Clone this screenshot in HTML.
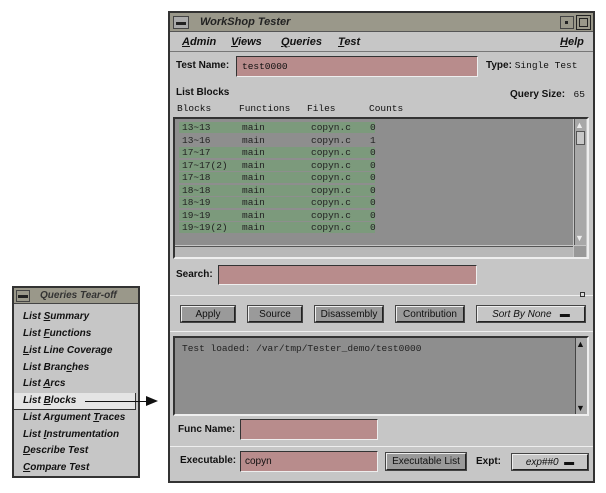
<!DOCTYPE html>
<html><head><style>
*{margin:0;padding:0;box-sizing:border-box}
body{width:606px;height:493px;background:#fff;position:relative;overflow:hidden;font-family:"Liberation Sans",sans-serif;font-size:10px;color:#111}
.a{position:absolute}
.win{left:168px;top:11px;width:427px;height:472px;background:#c6c6c6;border:2px solid #333}
.fld{background:#b88c8c;border:1px solid #333;border-right-color:#eee;border-bottom-color:#eee}
.btn{background:#9a9a9a;border:1px solid #222;border-top-color:#eee;border-left-color:#eee;box-shadow:0 0 0 1px #444;text-align:center;line-height:15px;font-size:10px}
.mono{font-family:"Liberation Mono",monospace;font-size:9.5px}
.row{position:absolute;left:4px;height:11px;width:196px;background:#7c9a7c;font-family:"Liberation Mono",monospace;font-size:9.5px;line-height:11px;color:#222}
.row span{position:absolute}
.sep{height:1px;background:#888;border-bottom:1px solid #eee}
b{font-weight:bold}
.it{font-style:italic;font-weight:bold}
.mi{position:absolute;left:10px;font-style:italic;font-weight:bold;font-size:10px;color:#111}
</style></head><body>
<div class="a win">
 <div class="a" style="left:0;top:0;width:423px;height:19px;background:#9a988a;border-bottom:1px solid #555"></div>
 <div class="a" style="left:3px;top:3px;width:16px;height:13px;border:1px solid #444;background:#aaa"><div class="a" style="left:2px;top:5px;width:10px;height:3px;background:#222"></div></div>
 <div class="a it" style="left:30px;top:3px;font-size:11px;color:#222">WorkShop Tester</div>
 <div class="a" style="left:390px;top:3px;width:14px;height:13px;border:1px solid #444"><div class="a" style="left:4px;top:4px;width:3px;height:3px;background:#222"></div></div>
 <div class="a" style="left:406px;top:2px;width:15px;height:15px;border:1px solid #222"><div class="a" style="left:2px;top:2px;width:9px;height:9px;border:1px solid #222"></div></div>
 <div class="a" style="left:0;top:19px;width:423px;height:20px;border-bottom:1px solid #777"></div>
 <div class="a it" style="left:12px;top:23px;font-size:11px"><u>A</u>dmin</div>
 <div class="a it" style="left:61px;top:23px;font-size:11px"><u>V</u>iews</div>
 <div class="a it" style="left:111px;top:23px;font-size:11px"><u>Q</u>ueries</div>
 <div class="a it" style="left:168px;top:23px;font-size:11px"><u>T</u>est</div>
 <div class="a it" style="left:390px;top:23px;font-size:11px"><u>H</u>elp</div>
 <div class="a" style="left:6px;top:47px"><b>Test Name:</b></div>
 <div class="a fld mono" style="left:66px;top:43px;width:242px;height:21px;padding:4px 5px">test0000</div>
 <div class="a" style="left:316px;top:47px"><b>Type:</b> <span class="mono">Single Test</span></div>
 <div class="a" style="left:6px;top:74px"><b>List Blocks</b></div>
 <div class="a" style="left:340px;top:76px"><b>Query Size:</b> <span class="mono">&nbsp;65</span></div>
 <div class="a mono" style="left:7px;top:90px">Blocks</div>
 <div class="a mono" style="left:69px;top:90px">Functions</div>
 <div class="a mono" style="left:137px;top:90px">Files</div>
 <div class="a mono" style="left:199px;top:90px">Counts</div>
 <div class="a" style="left:3px;top:104px;width:416px;height:142px;background:#c6c6c6;border:2px solid #333;border-right-color:#eee;border-bottom-color:#eee"></div>
 <div class="a" style="left:5px;top:106px;width:398px;height:126px;background:#8e8e8e"></div>
 <div class="a" style="left:5px;top:106px;width:398px;height:126px">
  <div class="row" style="top:3px"><span style="left:3px">13~13</span><span style="left:63px">main</span><span style="left:132px">copyn.c</span><span style="left:191px">0</span></div>
  <div class="row" style="top:16px;background:none"><span style="left:3px">13~16</span><span style="left:63px">main</span><span style="left:132px">copyn.c</span><span style="left:191px">1</span></div>
  <div class="row" style="top:28px"><span style="left:3px">17~17</span><span style="left:63px">main</span><span style="left:132px">copyn.c</span><span style="left:191px">0</span></div>
  <div class="row" style="top:41px"><span style="left:3px">17~17(2)</span><span style="left:63px">main</span><span style="left:132px">copyn.c</span><span style="left:191px">0</span></div>
  <div class="row" style="top:53px"><span style="left:3px">17~18</span><span style="left:63px">main</span><span style="left:132px">copyn.c</span><span style="left:191px">0</span></div>
  <div class="row" style="top:66px"><span style="left:3px">18~18</span><span style="left:63px">main</span><span style="left:132px">copyn.c</span><span style="left:191px">0</span></div>
  <div class="row" style="top:78px"><span style="left:3px">18~19</span><span style="left:63px">main</span><span style="left:132px">copyn.c</span><span style="left:191px">0</span></div>
  <div class="row" style="top:91px"><span style="left:3px">19~19</span><span style="left:63px">main</span><span style="left:132px">copyn.c</span><span style="left:191px">0</span></div>
  <div class="row" style="top:103px"><span style="left:3px">19~19(2)</span><span style="left:63px">main</span><span style="left:132px">copyn.c</span><span style="left:191px">0</span></div>
 </div>
 <div class="a" style="left:404px;top:106px;width:12px;height:126px;background:#a8a8a8;border-left:1px solid #555"></div>
 <div class="a" style="left:405px;top:107px;font-size:9px;color:#eee">▲</div>
 <div class="a" style="left:406px;top:118px;width:9px;height:14px;background:#c8c8c8;border:1px solid #555"></div>
 <div class="a" style="left:405px;top:220px;font-size:9px;color:#eee">▼</div>
 <div class="a" style="left:5px;top:233px;width:398px;height:11px;background:#b8b8b8;border-top:1px solid #555"></div>
 <div class="a" style="left:404px;top:233px;width:12px;height:11px;background:#999"></div>
 <div class="a" style="left:6px;top:256px"><b>Search:</b></div>
 <div class="a fld" style="left:48px;top:252px;width:259px;height:20px"></div>
 <div class="a sep" style="left:0;top:282px;width:423px"></div>
 <div class="a" style="left:410px;top:279px;width:5px;height:5px;border:1px solid #333;background:#ddd"></div>
 <div class="a btn" style="left:11px;top:293px;width:54px;height:16px">Apply</div>
 <div class="a btn" style="left:78px;top:293px;width:54px;height:16px">Source</div>
 <div class="a btn" style="left:145px;top:293px;width:68px;height:16px">Disassembly</div>
 <div class="a btn" style="left:226px;top:293px;width:68px;height:16px">Contribution</div>
 <div class="a btn" style="left:307px;top:293px;width:108px;height:16px;background:#c6c6c6"><i>Sort By None</i> &nbsp;&nbsp;▬</div>
 <div class="a sep" style="left:0;top:318px;width:423px"></div>
 <div class="a" style="left:3px;top:323px;width:416px;height:80px;background:#8e8e8e;border:2px solid #333;border-right-color:#eee;border-bottom-color:#eee"></div>
 <div class="a mono" style="left:12px;top:330px;color:#222">Test loaded: /var/tmp/Tester_demo/test0000</div>
 <div class="a" style="left:405px;top:325px;width:12px;height:76px;background:#a8a8a8;border-left:1px solid #444"></div>
 <div class="a" style="left:406px;top:326px;font-size:9px">▲</div>
 <div class="a" style="left:406px;top:390px;font-size:9px">▼</div>
 <div class="a" style="left:8px;top:411px"><b>Func Name:</b></div>
 <div class="a fld" style="left:70px;top:406px;width:138px;height:21px"></div>
 <div class="a sep" style="left:0;top:433px;width:423px"></div>
 <div class="a" style="left:10px;top:442px"><b>Executable:</b></div>
 <div class="a fld" style="left:70px;top:438px;width:138px;height:21px;padding:4px 4px;font-size:10px">copyn</div>
 <div class="a btn" style="left:216px;top:440px;width:80px;height:17px">Executable List</div>
 <div class="a" style="left:306px;top:443px"><b>Expt:</b></div>
 <div class="a btn" style="left:342px;top:441px;width:76px;height:16px;background:#c6c6c6"><i>exp##0</i> &nbsp;▬</div>
</div>
<!-- tear-off -->
<div class="a" style="left:12px;top:286px;width:128px;height:192px;background:#c6c6c6;border:2px solid #333"></div>
<div class="a" style="left:14px;top:288px;width:124px;height:16px;background:#9a988a;border-bottom:1px solid #444"></div>
<div class="a" style="left:16px;top:290px;width:14px;height:12px;border:1px solid #444"><div class="a" style="left:1px;top:4px;width:10px;height:3px;background:#222"></div></div>
<div class="a it" style="left:40px;top:290px;font-size:10px;color:#333">Queries Tear-off</div>
<div class="a" style="left:14px;top:393px;width:122px;height:17px;background:#e4e4e4;border-right:1px solid #333;border-bottom:1px solid #333"></div>
<div class="mi" style="left:23px;top:311px">List <u>S</u>ummary</div>
<div class="mi" style="left:23px;top:328px">List <u>F</u>unctions</div>
<div class="mi" style="left:23px;top:345px"><u>L</u>ist Line Coverage</div>
<div class="mi" style="left:23px;top:362px">List Bran<u>c</u>hes</div>
<div class="mi" style="left:23px;top:378px">List <u>A</u>rcs</div>
<div class="mi" style="left:23px;top:395px">List <u>B</u>locks</div>
<div class="mi" style="left:23px;top:412px">List Argument <u>T</u>races</div>
<div class="mi" style="left:23px;top:429px">List <u>I</u>nstrumentation</div>
<div class="mi" style="left:23px;top:445px"><u>D</u>escribe Test</div>
<div class="mi" style="left:23px;top:462px"><u>C</u>ompare Test</div>
<div class="a" style="left:85px;top:401px;width:63px;height:1px;background:#111"></div>
<svg class="a" style="left:146px;top:396px" width="14" height="11"><polygon points="0,0 12,5 0,10" fill="#111"/></svg>
</body></html>
